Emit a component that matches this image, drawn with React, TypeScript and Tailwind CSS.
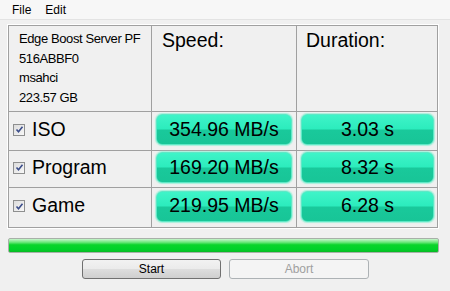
import React from "react";

const rows = [
  { name: "ISO", speed: "354.96 MB/s", time: "3.03 s", h: "h-[39px]" },
  { name: "Program", speed: "169.20 MB/s", time: "8.32 s", h: "h-[37px]" },
  { name: "Game", speed: "219.95 MB/s", time: "6.28 s", h: "h-[39px]" },
];

function Check() {
  return (
    <span className="flex h-[12px] w-[12px] items-center justify-center border border-[#8e8f8f] bg-gradient-to-br from-[#dcdcdc] to-[#f8f8f8]">
      <svg width="9" height="9" viewBox="0 0 9 9">
        <path d="M1.5 4.5 L3.5 6.8 L7.5 1.8" fill="none" stroke="#3b4d8a" strokeWidth="1.6" />
      </svg>
    </span>
  );
}

function Pill({ text, w }: { text: string; w: string }) {
  return (
    <div
      className={`${w} flex h-[31px] items-center justify-center rounded-[6px] border border-[#5ee8c6] bg-[linear-gradient(#3ff4c8_0%,#2cecbd_48%,#19c99b_52%,#18c597_100%)] text-[19.5px] text-black shadow-[0_0_1px_1px_#a8f0dc]`}
    >
      {text}
    </div>
  );
}

export default function App() {
  return (
    <div className="h-[291px] w-[450px] bg-[#f0f0f0] font-['Liberation_Sans',Arial,sans-serif]">
      <div className="flex h-[20px] items-center gap-[14px] border-b border-[#e3e3e3] bg-[#f7f7f7] pl-[12px] text-[12px] text-black">
        <span>File</span>
        <span>Edit</span>
      </div>

      <div className="ml-[8px] mt-[5px] w-[430px] border border-[#a0a0a0] outline outline-1 outline-offset-0 outline-white">
        <div className="flex h-[86px] border-b border-[#a0a0a0]">
          <div className="w-[143px] border-r border-[#a0a0a0] pl-[10px] pt-[3px] text-[13px] leading-[19.7px] tracking-[-0.4px] text-black">
            <div>Edge Boost Server PF</div>
            <div>516ABBF0</div>
            <div>msahci</div>
            <div>223.57 GB</div>
          </div>
          <div className="w-[145px] border-r border-[#a0a0a0] pl-[10px] pt-0 text-[19.5px] text-black">
            Speed:
          </div>
          <div className="flex-1 pl-[9px] pt-0 text-[19.5px] text-black">Duration:</div>
        </div>

        {rows.map((r, i) => (
          <div
            key={r.name}
            className={`flex ${r.h} ${i < rows.length - 1 ? "border-b border-[#a0a0a0]" : ""}`}
          >
            <div className="flex w-[143px] items-center gap-[7px] border-r border-[#a0a0a0] pb-[3px] pl-[4px] text-[19.5px] text-black">
              <Check />
              <span>{r.name}</span>
            </div>
            <div className="flex w-[145px] items-center border-r border-[#a0a0a0] pb-[3px] pl-[4px]">
              <Pill text={r.speed} w="w-[136px]" />
            </div>
            <div className="flex flex-1 items-center pb-[3px] pl-[4px]">
              <Pill text={r.time} w="w-[133px]" />
            </div>
          </div>
        ))}
      </div>

      <div className="ml-[8px] mt-[10px] h-[15px] w-[431px] rounded-[2px] border border-[#a8b0a8] bg-[linear-gradient(#c8f5cc_0%,#6ee87c_25%,#0ad42a_45%,#00d228_80%,#08b824_100%)]" />

      <div className="mt-[6px] flex gap-[8px] pl-[82px] text-[12px]">
        <button className="h-[20px] w-[139px] rounded-[3px] border border-[#707070] bg-[linear-gradient(#f2f2f2_0%,#ebebeb_48%,#dddddd_52%,#cfcfcf_100%)] text-black">
          Start
        </button>
        <button className="h-[20px] w-[140px] rounded-[3px] border border-[#adb2b5] bg-[#f4f4f4] text-[#a0a0a0]">
          Abort
        </button>
      </div>
    </div>
  );
}
